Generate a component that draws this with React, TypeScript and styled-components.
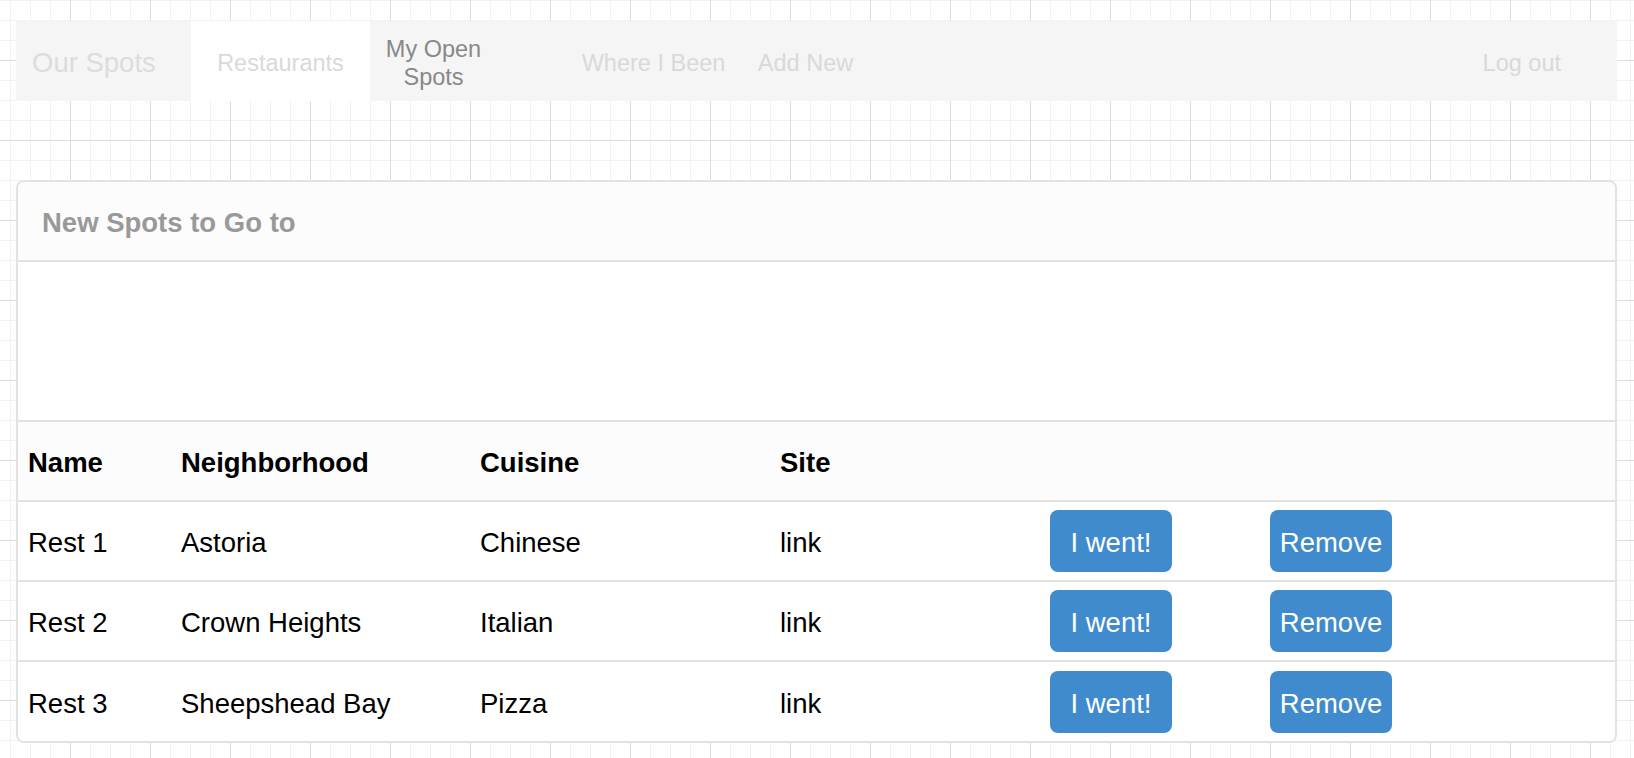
import React from 'react'
import styled, { createGlobalStyle } from 'styled-components'

const GlobalStyle = createGlobalStyle`
  html, body {
    margin: 0;
    padding: 0;
  }
  body {
    min-height: 100vh;
    font-family: "Liberation Sans", Arial, Helvetica, sans-serif;
    background-color: #ffffff;
    background-image:
      linear-gradient(to right, #dedede 1px, transparent 1px),
      linear-gradient(to bottom, #dedede 1px, transparent 1px),
      linear-gradient(to right, #f2f2f2 1px, transparent 1px),
      linear-gradient(to bottom, #f2f2f2 1px, transparent 1px);
    background-size: 80px 80px, 80px 80px, 20px 20px, 20px 20px;
    background-position: 70px 0, 0 60px, 10px 0, 0 0;
  }
`

const Page = styled.div`
  padding-top: 21px;
  padding-bottom: 17px;
`

const Nav = styled.nav`
  display: flex;
  align-items: stretch;
  height: 80px;
  margin: 0 17px 0 16px;
  background-color: #f5f5f5;
`

const Brand = styled.a`
  display: flex;
  align-items: center;
  box-sizing: border-box;
  width: 175px;
  padding: 4px 0 0 16px;
  font-size: 27.5px;
  color: #dcdcdc;
  cursor: pointer;
`

const NavLink = styled.a<{ $width: number; $active?: boolean; $strong?: boolean; $offset?: number }>`
  display: flex;
  align-items: center;
  justify-content: center;
  box-sizing: border-box;
  width: ${p => p.$width}px;
  margin-left: ${p => p.$offset || 0}px;
  padding: 4px 8px 0;
  text-align: center;
  font-size: 23.5px;
  line-height: 28px;
  color: ${p => (p.$strong ? '#888888' : '#d9d9d9')};
  background-color: ${p => (p.$active ? '#ffffff' : 'transparent')};
  cursor: pointer;
`

const LogOut = styled.a`
  display: flex;
  align-items: center;
  margin-left: auto;
  padding: 4px 56px 0 0;
  font-size: 23.5px;
  color: #d9d9d9;
  cursor: pointer;
`

const Panel = styled.section`
  margin: 79px 17px 0 16px;
  border: 2px solid #e2e2e2;
  border-radius: 8px;
  background-color: #ffffff;
  overflow: hidden;
`

const PanelHeading = styled.div`
  display: flex;
  align-items: center;
  box-sizing: border-box;
  height: 80px;
  padding: 4px 24px 0;
  background-color: #fcfcfc;
  border-bottom: 2px solid #e2e2e2;
  font-size: 27.5px;
  font-weight: bold;
  color: #999999;
`

const PanelBody = styled.div`
  height: 158px;
`

const Table = styled.table`
  width: 100%;
  border-collapse: collapse;
  table-layout: fixed;
  font-size: 27.5px;
  color: #000000;
`

const Row = styled.tr<{ $head?: boolean }>`
  border-top: 2px solid #e2e2e2;
  background-color: ${p => (p.$head ? '#fcfcfc' : '#ffffff')};
`

const Th = styled.th`
  box-sizing: border-box;
  height: 80px;
  padding: 4px 10px 0;
  text-align: left;
  font-weight: bold;
`

const Td = styled.td`
  box-sizing: border-box;
  height: 80px;
  padding: 4px 10px 0;
  vertical-align: middle;
`

const Button = styled.button`
  display: block;
  width: 122px;
  height: 62px;
  margin-top: -4px;
  padding: 4px 0 0;
  border: none;
  border-radius: 8px;
  background-color: #408bcd;
  color: #ffffff;
  font-family: inherit;
  font-size: 27.5px;
  cursor: pointer;
`

const spots = [
  { name: 'Rest 1', hood: 'Astoria', cuisine: 'Chinese' },
  { name: 'Rest 2', hood: 'Crown Heights', cuisine: 'Italian' },
  { name: 'Rest 3', hood: 'Sheepshead Bay', cuisine: 'Pizza' },
]

const colWidths = [153, 299, 300, 270, 220]

function App() {
  return (
    <Page>
      <GlobalStyle />
      <Nav>
        <Brand>Our Spots</Brand>
        <NavLink $width={179} $active>Restaurants</NavLink>
        <NavLink $width={127} $strong>My Open Spots</NavLink>
        <NavLink $width={177} $offset={68}>Where I Been</NavLink>
        <NavLink $width={127}>Add New</NavLink>
        <LogOut>Log out</LogOut>
      </Nav>
      <Panel>
        <PanelHeading>New Spots to Go to</PanelHeading>
        <PanelBody />
        <Table>
          <colgroup>
            {colWidths.map((w, i) => (
              <col key={i} style={{ width: w }} />
            ))}
            <col />
          </colgroup>
          <thead>
            <Row $head>
              <Th>Name</Th>
              <Th>Neighborhood</Th>
              <Th>Cuisine</Th>
              <Th>Site</Th>
              <Th />
              <Th />
            </Row>
          </thead>
          <tbody>
            {spots.map(s => (
              <Row key={s.name}>
                <Td>{s.name}</Td>
                <Td>{s.hood}</Td>
                <Td>{s.cuisine}</Td>
                <Td>link</Td>
                <Td>
                  <Button>I went!</Button>
                </Td>
                <Td>
                  <Button>Remove</Button>
                </Td>
              </Row>
            ))}
          </tbody>
        </Table>
      </Panel>
    </Page>
  )
}

export default App
